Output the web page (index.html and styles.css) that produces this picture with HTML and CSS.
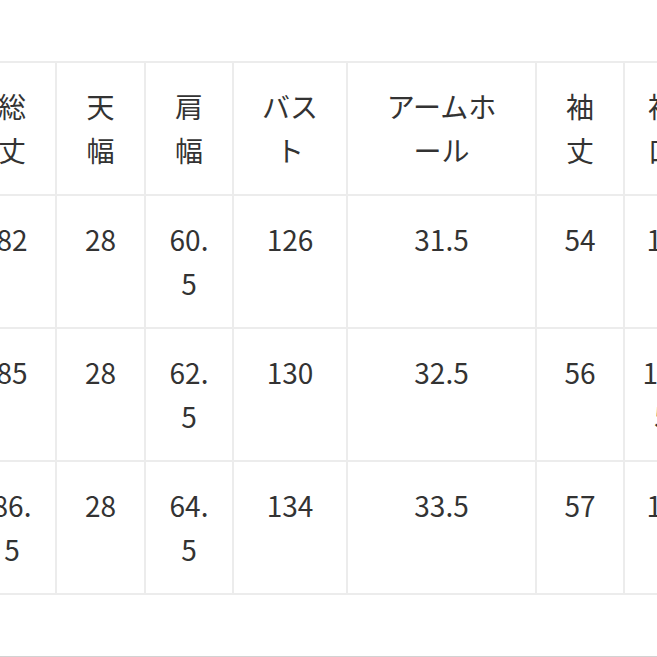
FILE: index.html
```html
<!DOCTYPE html>
<html lang="ja">
<head>
<meta charset="utf-8">
<title>サイズ表</title>
<link rel="stylesheet" href="styles.css">
</head>
<body>
<div class="page">
  <table class="size-table">
    <tr>
      <th class="c-n">総丈</th>
      <th class="c-n c-w89">天幅</th>
      <th class="c-n">肩幅</th>
      <th class="c-n c-bust">バスト</th>
      <th class="c-n c-arm">アームホール</th>
      <th class="c-n">袖丈</th>
      <th class="c-n c-last">袖口</th>
    </tr>
    <tr>
      <td>82</td><td>28</td><td>60.5</td><td>126</td><td>31.5</td><td>54</td><td>13</td>
    </tr>
    <tr>
      <td>85</td><td>28</td><td>62.5</td><td>130</td><td>32.5</td><td>56</td><td>13.5</td>
    </tr>
    <tr>
      <td>86.5</td><td>28</td><td>64.5</td><td>134</td><td>33.5</td><td>57</td><td>14</td>
    </tr>
  </table>
</div>
</body>
</html>
```
FILE: styles.css
```css
html, body {
  margin: 0;
  padding: 0;
  background: #ffffff;
}

.page {
  height: 656px;
  border-bottom: 1px solid #d2d2d2;
  overflow: hidden;
}

.size-table {
  margin-top: 61px;
  margin-left: -33px;
  border-collapse: separate;
  border-spacing: 0;
  table-layout: fixed;
  width: 746px;
  border-top: 2px solid #ececec;
  border-left: 2px solid #ececec;
  font-family: "Noto Sans CJK JP", "Noto Sans", sans-serif;
  font-size: 28px;
  line-height: 44px;
  color: #333333;
}

.size-table th,
.size-table td {
  box-sizing: border-box;
  height: 133px;
  padding: 21px 20px 22px;
  border-right: 2px solid #ececec;
  border-bottom: 2px solid #ececec;
  text-align: center;
  vertical-align: top;
  font-weight: normal;
  word-break: break-all;
}

.size-table th.c-n { width: 88px; }
.size-table th.c-w89 { width: 89px; }
.size-table th.c-bust { width: 114px; }
.size-table th.c-arm { width: 189px; }
.size-table th.c-last { width: 88px; }

.size-table th.c-arm,
.size-table tr td:nth-child(5) {
  padding-left: 30px;
  padding-right: 30px;
}

.size-table th.c-last,
.size-table tr td:nth-child(7) {
  padding-left: 14px;
  padding-right: 26px;
}
```
